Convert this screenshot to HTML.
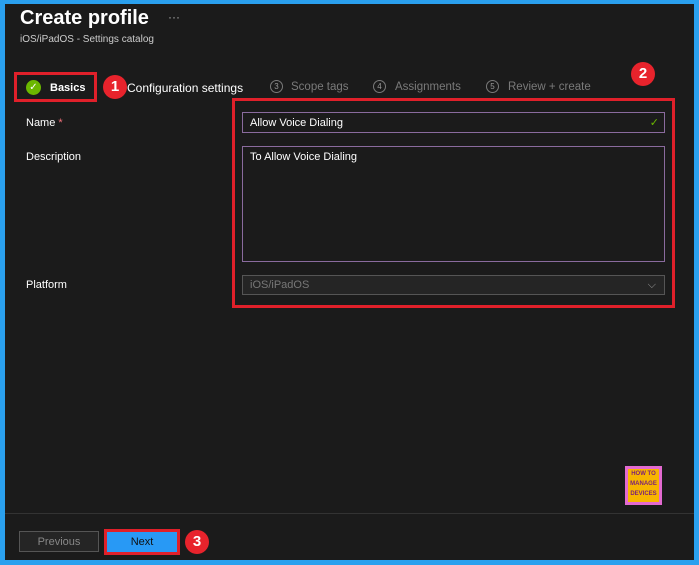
<!DOCTYPE html>
<html><head><style>
*{box-sizing:border-box;margin:0;padding:0}
body{width:699px;height:565px;background:#2aa0ee;font-family:"Liberation Sans",sans-serif;position:relative;overflow:hidden}
.main{position:absolute;left:5px;top:4px;right:5px;bottom:5px;background:#1b1b1b}
.a{position:absolute}
.t{color:#fff;font-size:11px}
.g{color:#7a7a7a;font-size:11.5px}
.num{position:absolute;width:13px;height:13px;border:1px solid #7a7a7a;border-radius:50%;color:#9a9a9a;font-size:8px;text-align:center;line-height:11px}
.red{border:3px solid #e0202a}
.badge{position:absolute;width:24px;height:24px;border-radius:50%;background:#e8232c;color:#fff;font-weight:bold;font-size:15px;text-align:center;line-height:24px}
.inp{position:absolute;border:1px solid #8a6b9e;background:#1b1b1b;color:#fff;font-size:11px;padding-left:7px}
</style></head><body>
<div class="main"></div>
<div class="a" style="left:20px;top:7px;color:#fff;font-size:20px;font-weight:bold">Create profile</div>
<div class="a" style="left:168px;top:10px;color:#aaa;font-size:12px">···</div>
<div class="a" style="left:20px;top:34px;color:#ccc;font-size:10px">iOS/iPadOS - Settings catalog</div>
<div class="a red" style="left:14px;top:72px;width:83px;height:30px"></div>
<div class="a" style="left:26px;top:80px;width:15px;height:15px;border-radius:50%;background:#6bb700;color:#fff;font-size:10px;text-align:center;line-height:15px">✓</div>
<div class="a t" style="left:50px;top:82px;font-weight:bold">Basics</div>
<div class="badge" style="left:103px;top:75px">1</div>
<div class="a t" style="left:127px;top:81px;font-size:12px">Configuration settings</div>
<div class="num" style="left:270px;top:80px">3</div><div class="a g" style="left:291px;top:81px">Scope tags</div>
<div class="num" style="left:373px;top:80px">4</div><div class="a g" style="left:395px;top:81px">Assignments</div>
<div class="num" style="left:486px;top:80px">5</div><div class="a g" style="left:508px;top:81px">Review + create</div>
<div class="badge" style="left:631px;top:62px">2</div>
<div class="a red" style="left:232px;top:98px;width:443px;height:210px"></div>
<div class="a t" style="left:26px;top:117px">Name <span style="color:#f1707a">*</span></div>
<div class="a t" style="left:26px;top:151px">Description</div>
<div class="a t" style="left:26px;top:279px">Platform</div>
<div class="inp" style="left:242px;top:112px;width:423px;height:21px;line-height:20px">Allow Voice Dialing<span style="position:absolute;right:5px;color:#6bb700">✓</span></div>
<div class="inp" style="left:242px;top:146px;width:423px;height:116px;padding-top:4px">To Allow Voice Dialing</div>
<div class="inp" style="left:242px;top:275px;width:423px;height:20px;line-height:19px;border-color:#555;background:#252525;color:#777">iOS/iPadOS<span style="position:absolute;right:8px;color:#999">⌵</span></div>
<div class="a" style="left:625px;top:466px;width:37px;height:39px;background:#e36ad0;padding:3px">
<div style="background:#f7b500;height:100%;font-size:6px;font-weight:bold;color:#7a1f7a;text-align:center;line-height:10px">HOW TO<br>MANAGE<br>DEVICES</div></div>
<div class="a" style="left:5px;top:513px;width:689px;height:1px;background:#333"></div>
<div class="a" style="left:19px;top:531px;width:80px;height:21px;border:1px solid #555;background:#252525;color:#888;font-size:11px;text-align:center;line-height:20px">Previous</div>
<div class="a red" style="left:104px;top:529px;width:76px;height:26px;background:#2899f5;color:#111;font-size:11px;text-align:center;line-height:21px">Next</div>
<div class="badge" style="left:185px;top:530px">3</div>
</body></html>
